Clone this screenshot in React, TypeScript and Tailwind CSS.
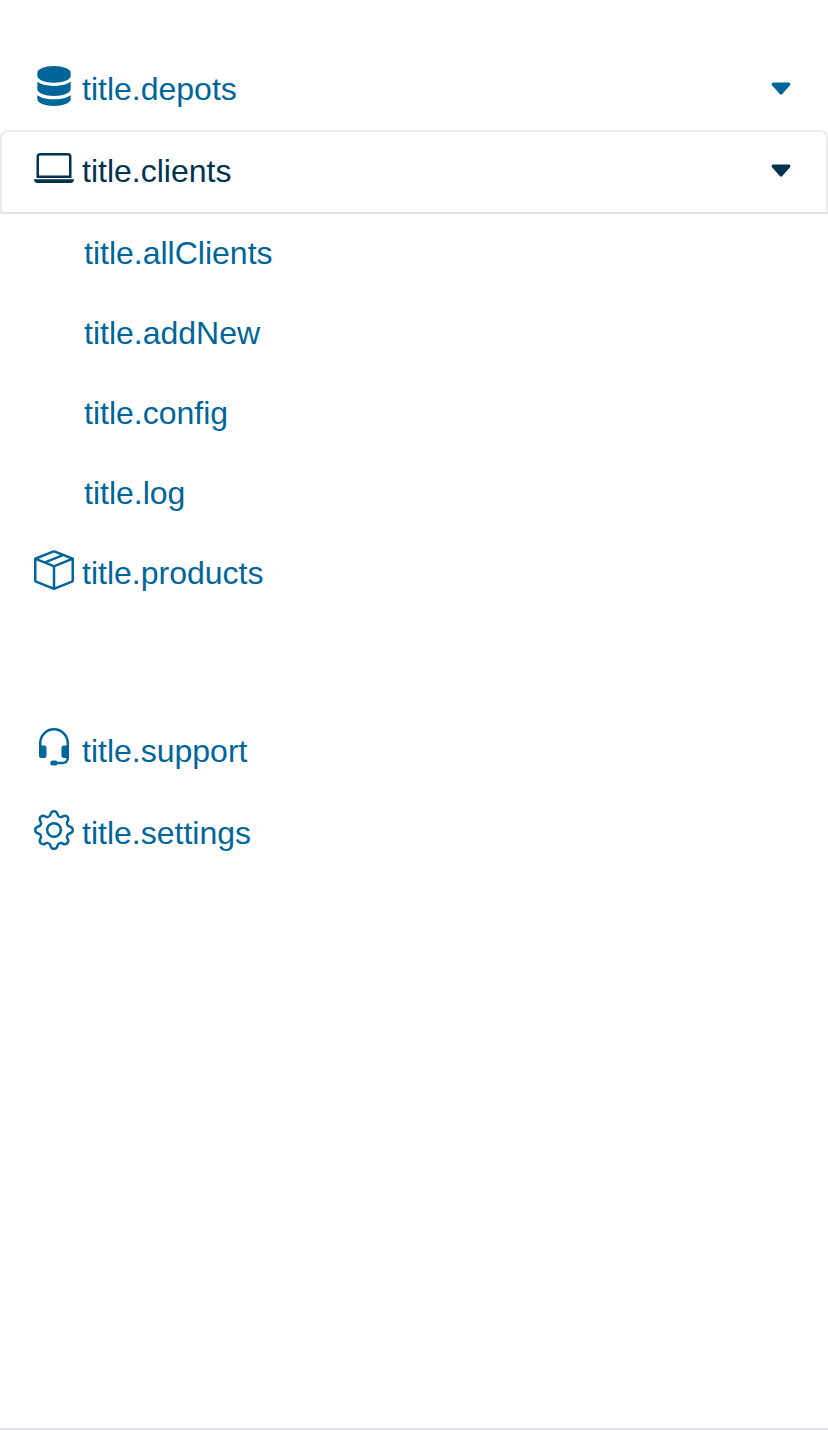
import { useState } from "react";
import type { IconType } from "react-icons";
import { BsBoxSeam, BsCaretDownFill, BsGear, BsHeadset, BsLaptop, BsServer } from "react-icons/bs";

type Item = {
  label: string;
  icon: IconType;
  children?: string[];
};

const mainItems: Item[] = [
  { label: "title.depots", icon: BsServer, children: [] },
  {
    label: "title.clients",
    icon: BsLaptop,
    children: ["title.allClients", "title.addNew", "title.config", "title.log"],
  },
];

const rowClass = "flex w-full items-start gap-2 px-8 pt-4 pb-[18px] text-left";

function RowContent({ item }: { item: Item }) {
  const Icon = item.icon;
  return (
    <>
      <Icon className="size-10 shrink-0" aria-hidden="true" />
      <span className="grow">{item.label}</span>
    </>
  );
}

function NavLink({ item }: { item: Item }) {
  return (
    <li className="border-x-2 border-transparent">
      <a href="#" className={rowClass}>
        <RowContent item={item} />
      </a>
    </li>
  );
}

export default function App() {
  const [open, setOpen] = useState("title.clients");

  return (
    <nav className="flex min-h-screen flex-col border-b-2 border-[#dee2e6] bg-white pt-12 font-['Liberation_Sans',Arial,sans-serif] text-[32px] leading-[46px] text-[#00669a]">
      <ul>
        {mainItems.map((item) => {
          const active = item.label === open;
          return (
            <li key={item.label}>
              <button
                type="button"
                aria-expanded={active}
                onClick={() => setOpen(active ? "" : item.label)}
                className={
                  active
                    ? `${rowClass} rounded-t-lg border-2 border-[#e9ecef] border-b-[#dee2e6] text-[#003350]`
                    : `${rowClass} border-2 border-b-0 border-transparent`
                }
              >
                <RowContent item={item} />
                <BsCaretDownFill className="my-2.5 size-6.5 shrink-0" aria-hidden="true" />
              </button>
              {active && (
                <ul>
                  {item.children?.map((child) => (
                    <li key={child}>
                      <a href="#" className="block pt-4 pr-8 pb-[18px] pl-21">
                        {child}
                      </a>
                    </li>
                  ))}
                </ul>
              )}
            </li>
          );
        })}
        <NavLink item={{ label: "title.products", icon: BsBoxSeam }} />
      </ul>
      <ul className="mt-24 flex flex-col gap-0.5 pt-0.5">
        <NavLink item={{ label: "title.support", icon: BsHeadset }} />
        <NavLink item={{ label: "title.settings", icon: BsGear }} />
      </ul>
    </nav>
  );
}
